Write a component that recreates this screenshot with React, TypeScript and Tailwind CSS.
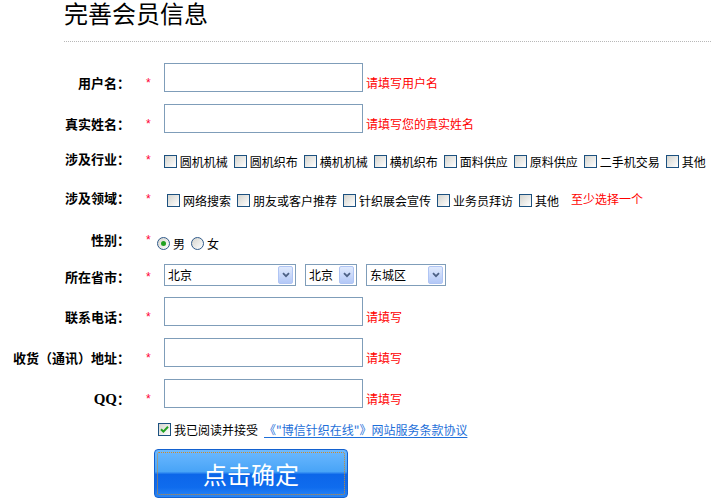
import React from "react";

function Checkbox({ checked = false }: { checked?: boolean }) {
  return (
    <div className="flex h-[13px] w-[13px] shrink-0 items-center justify-center border border-[#1c5180] bg-[linear-gradient(135deg,#d4d4ce,#ffffff)]">
      {checked && (
        <svg width="9" height="9" viewBox="0 0 9 9">
          <path d="M1 4.2 L3.4 6.6 L8 1.8" fill="none" stroke="#21a121" strokeWidth="2" />
        </svg>
      )}
    </div>
  );
}

function Radio({ checked = false }: { checked?: boolean }) {
  return (
    <div className="flex h-[13px] w-[13px] shrink-0 items-center justify-center rounded-full border border-[#2f5a8a] bg-[linear-gradient(135deg,#d4d4ce,#ffffff)]">
      {checked && <div className="h-[5px] w-[5px] rounded-full bg-[#21a121]" />}
    </div>
  );
}

function Star({ mt }: { mt: string }) {
  return (
    <div className={`w-[24px] pl-[16px] font-['Liberation_Sans',sans-serif] text-[12px] leading-[12px] text-[#ff0033] ${mt}`}>
      *
    </div>
  );
}

function Label({ text, mt }: { text: React.ReactNode; mt: string }) {
  return (
    <div className={`w-[130px] shrink-0 whitespace-nowrap text-right text-[13px] font-bold leading-[13px] ${mt}`}>
      {text}
    </div>
  );
}

function Option({ text }: { text: string }) {
  return (
    <div className="mr-[6px] flex items-center">
      <Checkbox />
      <span className="ml-[3px] whitespace-nowrap text-[12px] leading-[12px]">{text}</span>
    </div>
  );
}

function Select({ text, w }: { text: string; w: string }) {
  return (
    <div className={`flex h-[22px] items-center justify-between border border-[#7f9db9] bg-white pl-[3px] pr-[2px] ${w}`}>
      <span className="text-[12px] leading-[12px]">{text}</span>
      <div className="flex h-[18px] w-[15px] items-center justify-center rounded-[2px] border border-[#b0c5f4] bg-[linear-gradient(180deg,#e0eafd,#b3c8f7)]">
        <svg width="8" height="6" viewBox="0 0 8 6">
          <path d="M1 1.2 L4 4.2 L7 1.2" fill="none" stroke="#4d6185" strokeWidth="1.8" />
        </svg>
      </div>
    </div>
  );
}

function TextRow({ label, hint, mt }: { label: React.ReactNode; hint: string; mt: string }) {
  return (
    <div className={`flex h-[29px] items-start ${mt}`}>
      <Label text={label} mt="mt-[13px]" />
      <Star mt="mt-[14px]" />
      <input type="text" className="ml-[10px] h-[29px] w-[199px] border border-[#7f9db9] bg-white outline-none" />
      <div className="ml-[3px] mt-[14px] whitespace-nowrap text-[12px] leading-[12px] text-[#ff0000]">{hint}</div>
    </div>
  );
}

export default function App() {
  return (
    <div className="h-[500px] w-[711px] overflow-hidden bg-white font-['Noto_Sans_CJK_SC',sans-serif] text-black">
      <div className="ml-[64px] flex h-[42px] items-start border-b border-dotted border-[#b8b8b8]">
        <h1 className="text-[24px] font-normal leading-[26px]">完善会员信息</h1>
      </div>

      <TextRow label="用户名：" hint="请填写用户名" mt="mt-[21px]" />
      <TextRow label="真实姓名：" hint="请填写您的真实姓名" mt="mt-[12px]" />

      <div className="mt-[19px] flex items-start">
        <Label text="涉及行业：" mt="mt-0" />
        <Star mt="mt-[2px]" />
        <div className="ml-[13px] mt-[3px] flex h-[13px] items-center">
          {["圆机机械", "圆机织布", "横机机械", "横机织布", "面料供应", "原料供应", "二手机交易", "其他"].map((t) => (
            <Option key={t} text={t} />
          ))}
        </div>
      </div>

      <div className="mt-[23px] flex items-start">
        <Label text="涉及领域：" mt="mt-0" />
        <Star mt="mt-[2px]" />
        <div className="ml-[13px] mt-[3px] flex h-[13px] items-center">
          {["网络搜索", "朋友或客户推荐", "针织展会宣传", "业务员拜访", "其他"].map((t) => (
            <Option key={t} text={t} />
          ))}
          <span className="mb-[3px] ml-[6px] whitespace-nowrap text-[12px] leading-[12px] text-[#ff0000]">至少选择一个</span>
        </div>
      </div>

      <div className="mt-[26px] flex items-start">
        <Label text="性别：" mt="mt-0" />
        <Star mt="mt-[1px]" />
        <div className="ml-[3px] mt-[4px] flex h-[13px] items-center">
          <Radio checked />
          <span className="ml-[3px] mr-[6px] text-[12px] leading-[12px]">男</span>
          <Radio />
          <span className="ml-[3px] text-[12px] leading-[12px]">女</span>
        </div>
      </div>

      <div className="mt-[14px] flex h-[22px] items-start">
        <Label text="所在省市：" mt="mt-[6px]" />
        <Star mt="mt-[7px]" />
        <div className="ml-[10px] flex">
          <Select text="北京" w="w-[132px]" />
          <div className="ml-[9px]">
            <Select text="北京" w="w-[52px]" />
          </div>
          <div className="ml-[9px]">
            <Select text="东城区" w="w-[80px]" />
          </div>
        </div>
      </div>

      <TextRow label="联系电话：" hint="请填写" mt="mt-[11px]" />
      <TextRow label="收货（通讯）地址：" hint="请填写" mt="mt-[12px]" />
      <TextRow
        label={
          <>
            <span className="font-['Liberation_Serif',serif] text-[15px] leading-[13px]">QQ</span>：
          </>
        }
        hint="请填写"
        mt="mt-[12px]"
      />

      <div className="mt-[15px] flex h-[13px] items-center pl-[154px]">
        <div className="ml-[4px]">
          <Checkbox checked />
        </div>
        <span className="ml-[3px] whitespace-nowrap text-[12px] leading-[12px]">我已阅读并接受</span>
        <a className="ml-[6px] whitespace-nowrap text-[12px] leading-[12px] text-[#1e6fd9] underline underline-offset-[2px]">
          《"博信针织在线"》网站服务条款协议
        </a>
      </div>

      <div className="ml-[154px] mt-[13px] h-[49px] w-[194px] rounded-[4px] border border-[#1361cf] bg-[linear-gradient(180deg,#6db9ff_0%,#48a4f7_46%,#0c66e9_52%,#0f6cee_80%,#2a86f5_100%)] p-[2px]">
        <div className="flex h-full w-full items-center justify-center rounded-[2px] border border-dotted border-[#d08a2a] text-[24px] leading-[26px] text-white">
          点击确定
        </div>
      </div>
    </div>
  );
}
